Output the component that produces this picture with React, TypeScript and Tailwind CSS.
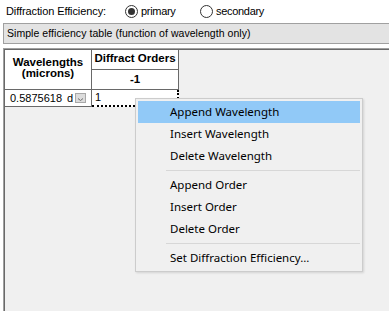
import React from "react";

function Radio({ checked }: { checked: boolean }) {
  return (
    <span className="w-[13px] h-[13px] rounded-full border border-[#333333] bg-white flex items-center justify-center">
      {checked && <span className="w-[7px] h-[7px] rounded-full bg-[#333333]" />}
    </span>
  );
}

const items: (string | null)[] = [
  "Append Wavelength",
  "Insert Wavelength",
  "Delete Wavelength",
  null,
  "Append Order",
  "Insert Order",
  "Delete Order",
  null,
  "Set Diffraction Efficiency...",
];

export default function App() {
  return (
    <div
      className="w-[389px] h-[311px] bg-white relative overflow-hidden flex flex-col text-black"
      style={{ fontFamily: '"Liberation Sans", Arial, sans-serif' }}
    >
      <div className="h-[23px] flex items-center pl-[6px] text-[10.5px] shrink-0">
        <span className="w-[119px] text-[11px] tracking-[-0.1px]">Diffraction Efficiency:</span>
        <span className="flex items-center gap-[3px] w-[75px]">
          <Radio checked />
          <span className="text-[11px] tracking-[-0.3px]">primary</span>
        </span>
        <span className="flex items-center gap-[3px]">
          <Radio checked={false} />
          <span className="text-[11px] tracking-[-0.3px]">secondary</span>
        </span>
      </div>
      <div className="ml-[3px] h-[21px] shrink-0 border-y border-l border-[#a0a0a0] bg-[#e3e3e3] flex items-center pl-[3px] text-[10.5px] tracking-[0.05px]">
        Simple efficiency table (function of wavelength only)
      </div>
      <div className="h-[4px] shrink-0" />
      <div className="ml-[3px] flex-1 border-t border-l border-[#a0a0a0] flex flex-col">
        <div className="flex-1 border-t border-l border-[#696969] bg-[#f0f0f0]">
          <div className="grid grid-cols-[87px_87px] grid-rows-[20px_20px_17px] text-[11.5px]">
            <div className="row-span-2 bg-white border-r border-b border-[#696969] flex flex-col items-center justify-center font-bold pb-[3px]">
              <span className="leading-[11px]">Wavelengths</span>
              <span className="leading-[11px]">(microns)</span>
            </div>
            <div className="bg-white border-r border-b border-[#696969] flex items-center justify-center font-bold pb-[2px]">
              Diffract Orders
            </div>
            <div className="bg-white border-r border-b border-[#696969] flex items-center justify-center font-bold">
              -1
            </div>
            <div className="bg-white border-r border-b border-[#696969] flex items-center pl-[5px] text-[11px]">
              <span>0.5875618</span>
              <span className="ml-[5px]">d</span>
              <span className="ml-[2px] w-[11px] h-[10px] bg-[#dcdcdc] border border-[#a8a8a8] flex items-end justify-center">
                <svg width="7" height="5" viewBox="0 0 7 5">
                  <path d="M1 1.5 L3.5 3.5 L6 1.5" stroke="#707070" strokeWidth="1" fill="none" />
                </svg>
              </span>
            </div>
            <div className="bg-white border-r-2 border-b-2 border-dotted border-black flex items-center pl-[3px] text-[11px]">
              1
            </div>
          </div>
        </div>
      </div>

      <div
        className="absolute left-[135px] top-[98px] w-[228px] h-[174px] border border-[#cccccc] bg-[#f0f0f0] p-[2px] flex flex-col shadow-[1px_1px_2px_rgba(0,0,0,0.12)]"
        style={{ fontFamily: '"Noto Sans", "Open Sans", sans-serif' }}
      >
        {items.map((it, i) =>
          it === null ? (
            <div key={i} className="h-[7px] flex items-center pl-[28px]">
              <div className="h-px w-full bg-[#d7d7d7]" />
            </div>
          ) : (
            <div
              key={i}
              className={`h-[22px] flex items-center pl-[32px] text-[11.5px] ${i === 0 ? "bg-[#91c9f7]" : ""}`}
            >
              {it}
            </div>
          )
        )}
      </div>
    </div>
  );
}
